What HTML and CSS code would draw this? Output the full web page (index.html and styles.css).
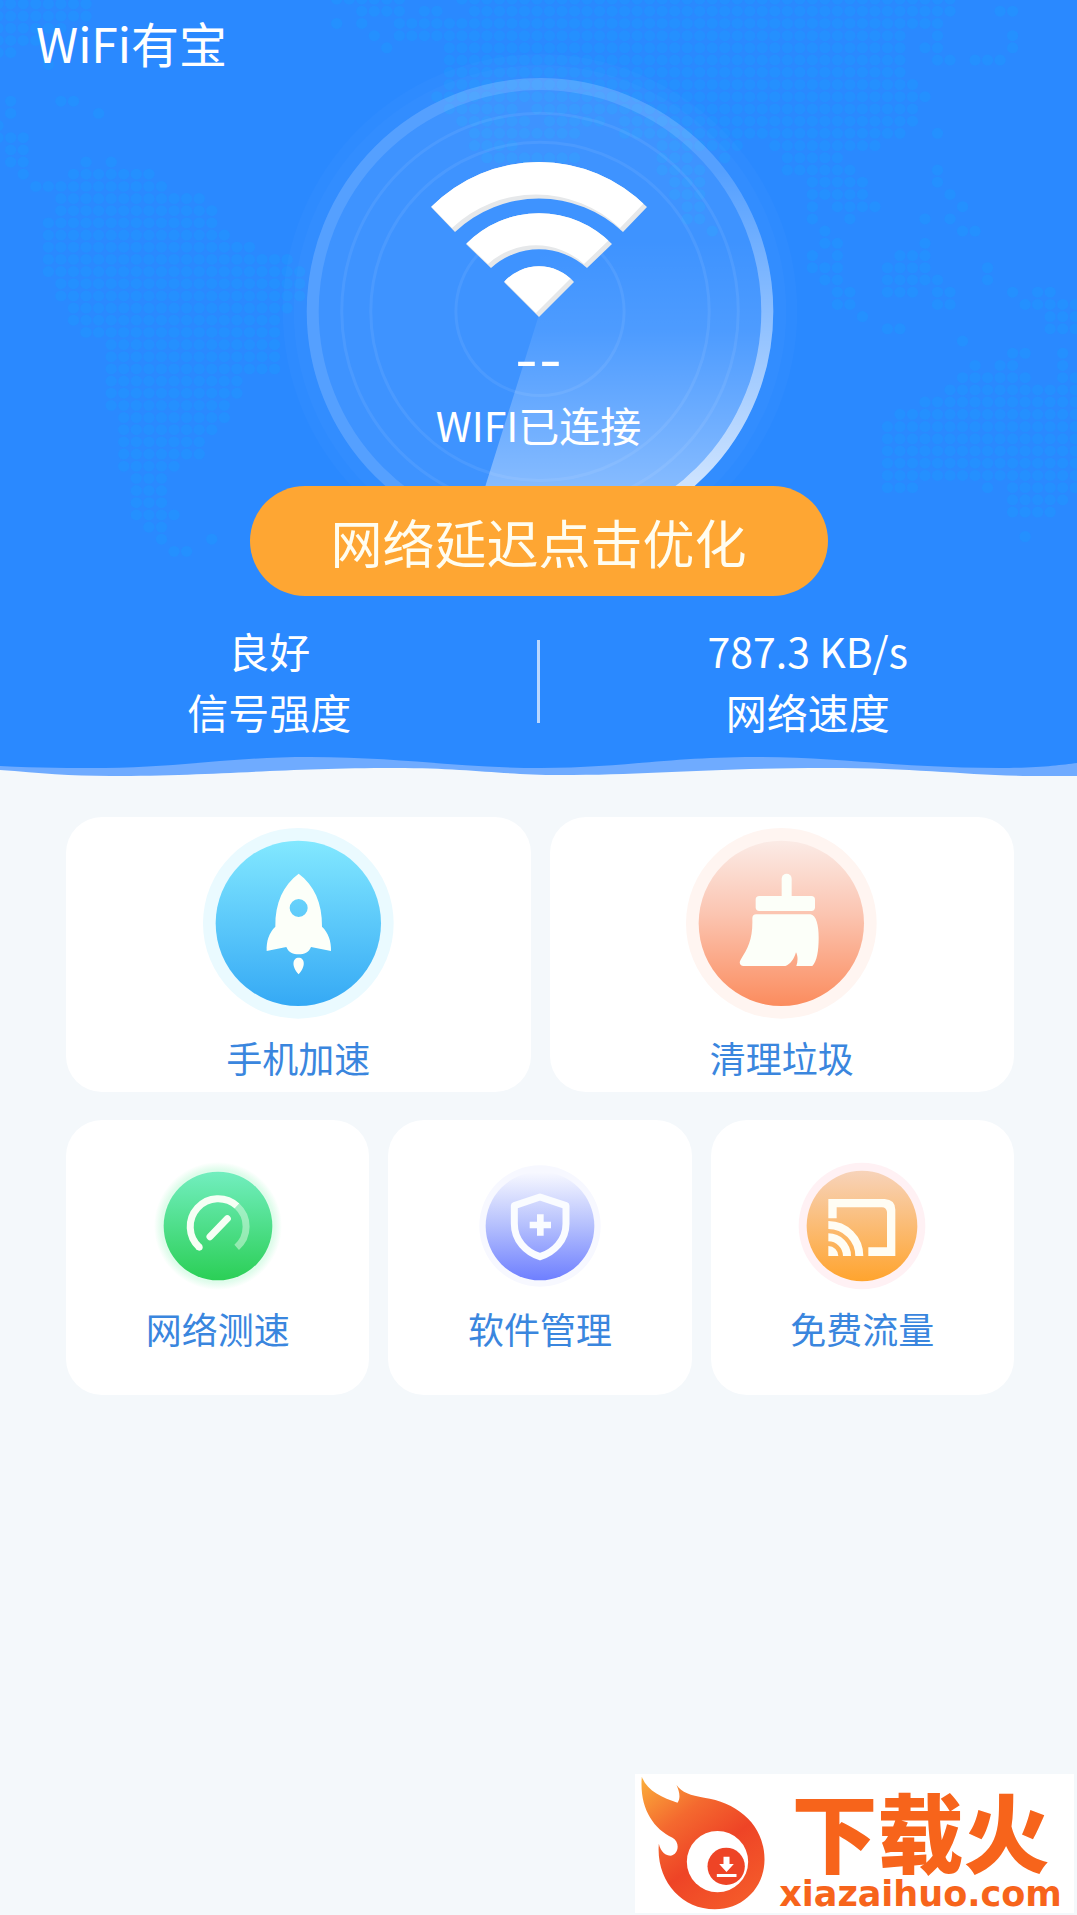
FILE: index.html
```html
<!DOCTYPE html>
<html lang="zh-CN">
<head>
<meta charset="utf-8">
<meta name="viewport" content="width=device-width, initial-scale=1">
<title>WiFi有宝</title>
<link rel="stylesheet" href="styles.css">
</head>
<body>
<header class="hero">
  <svg class="hero-art" viewBox="0 0 1077 776" preserveAspectRatio="xMidYMin slice" aria-hidden="true">
    <defs>
      <linearGradient id="sweep" gradientUnits="userSpaceOnUse" x1="0" y1="240" x2="0" y2="500">
        <stop offset="0" stop-color="#fff" stop-opacity="0"/>
        <stop offset=".35" stop-color="#fff" stop-opacity=".08"/>
        <stop offset="1" stop-color="#fff" stop-opacity=".4"/>
      </linearGradient>
      <linearGradient id="rim" gradientUnits="userSpaceOnUse" x1="0" y1="170" x2="0" y2="480">
        <stop offset="0" stop-color="#fff" stop-opacity="0"/>
        <stop offset="1" stop-color="#fff" stop-opacity=".7"/>
      </linearGradient>
    </defs>
    <!-- dotted world map, one subpath per run of dots -->
    <g class="map-dots">
      <path transform="translate(49 174) scale(12.55 12.15)" d="M-4-14H3.1M-4-13H3.1M-4-12H1.1M-4-11H-.9M-4-10H-2.9M0-9h.1M-3-6h.1M1-6H2.1M-3-5h.1M4-5h.1M-4-4h.1M-4-3H-1.9M-3-2H-1.9M-3-1H-1.9M-2 0h.1M3-1h.1M5-1h.1M2 0H8.1M-1 1H9.1M1 2H12.1M1 3H13.1M0 4H13.1M0 5H14.1M0 6H16.1M0 7H19.1M0 8H20.1M1 9H20.1M1 10H20.1M2 11H19.1M2 12H18.1M3 13H18.1M5 14H18.1M5 15H18.1M5 16H18.1M5 17H15.1M5 18H15.1M5 19H14.1M6 20H14.1M6 21H13.1M6 22H12.1M6 23H12.1M6 24H10.1M7 25H9.1M7 26H9.1M7 27H9.1M7 28H10.1M8 29H9.1M9 30h.1M13 30h.1M10 31H11.1"/>
      <path transform="translate(537 -1) scale(12.5 12.2)" d="M-16 0H-10.9M-6 0H33.1M-14 1H-10.9M-9 1H-7.9M-5 1H33.1M37 1H38.1M-16 2h.1M-14 2h.1M-11 2H32.1M-13 3h.1M-11 3H29.1M32 3h.1M38 3h.1M-12 4h.1M-7 4H29.1M31 4H32.1M38 4h.1M-7 5H29.1M32 5H33.1M35 5H37.1M-7 6H29.1M-7 7H30.1M-8 8H31.1M-7 9H-1.9M0 9H30.1M-6 10H-.9M1 10H5.1M7 10H30.1M-5 11H3.1M7 11H29.1M32 11h.1M-5 12H-1.9M10 12H16.1M19 12H27.1M-4 13H3.1M10 13H12.1M15 13h.1M20 13H24.1M10 14H13.1M20 14H25.1M32 14h.1M11 15H13.1M22 15H26.1M32 15h.1M11 16H13.1M22 16H26.1M33 16h.1M12 17H13.1M22 17h.1M24 17H27.1M34 17h.1M12 18H13.1M22 18h.1M25 18h.1M31 18h.1M33 18h.1M14 19h.1M23 19h.1M34 19H35.1M23 20H24.1M31 20h.1M22 21h.1M24 21h.1M29 21H31.1M22 22H24.1M28 22H31.1M36 22h.1M23 23H24.1M28 23H32.1M36 23h.1M24 24H25.1M28 24H30.1M32 24H33.1M38 24h.1M40 24H41.1M24 25H25.1M32 25H33.1M39 25H43.1M26 26h.1M41 26H43.1M28 27H29.1M41 27H43.1M34 28h.1M38 29H39.1M42 29h.1M35 30h.1M37 30H38.1M42 30h.1M34 31H39.1M42 31H43.1M33 32H43.1M31 33H43.1M29 34H43.1M28 35H43.1M28 36H43.1M28 37H43.1M28 38H43.1M28 39H43.1M28 40H30.1M36 40h.1M38 40H43.1M38 41H42.1M38 42H41.1M39 44h.1"/>
    </g>
    <g class="radar">
      <circle class="halo" cx="540" cy="311" r="257"/>
      <circle class="halo" cx="540" cy="311" r="246"/>
      <circle class="disc" cx="540" cy="311" r="233"/>
      <path fill="url(#sweep)" d="M540 311L474 522A221 221 0 0 0 761 311A221 221 0 0 0 540 90Z"/>
      <circle class="band" cx="540" cy="311" r="227"/>
      <path fill="none" stroke="url(#rim)" stroke-width="12" d="M540 84A227 227 0 0 1 540 538"/>
      <circle class="ring" cx="540" cy="311" r="198"/>
      <circle class="ring" cx="540" cy="311" r="169"/>
      <circle class="ring" cx="540" cy="311" r="84"/>
    </g>
  </svg>

  <h1 class="title">WiFi有宝</h1>

  <div class="status">
    <svg class="wifi" viewBox="432 161 216 157" aria-hidden="true">
      <defs>
        <path id="fan" d="M432 207A152 152 0 0 1 648 207L624 232A122 122 0 0 0 456 232ZM467 244A102 102 0 0 1 613 244L588 268A71 71 0 0 0 492 268ZM505 282A47 47 0 0 1 575 282L540 317Z"/>
        <clipPath id="fan-clip"><use href="#fan"/></clipPath>
      </defs>
      <use href="#fan" fill="#e6e8ea"/>
      <g clip-path="url(#fan-clip)"><use href="#fan" fill="#fff" transform="translate(-3 -4)"/></g>
    </svg>
    <p class="network-name">--</p>
    <p class="network-state">WIFI已连接</p>
  </div>

  <button class="optimize" type="button">网络延迟点击优化</button>

  <dl class="stats">
    <div class="stat"><dd>良好</dd><dt>信号强度</dt></div>
    <div class="stat"><dd>787.3 KB/s</dd><dt>网络速度</dt></div>
  </dl>

  <svg class="wave" viewBox="0 0 1077 20" preserveAspectRatio="none" aria-hidden="true">
    <path fill="#6fabff" d="M0 9C40 11 70 11 105 11C185 10 230 0 310 0C400 0 460 11 541 11C620 11 670 0 754 0C840 0 900 11 1000 11C1040 11 1060 8 1077 6V20H0Z"/>
    <path fill="#f4f8fb" d="M0 13C40 16 70 19 110 19C220 19 280 11 395 11C470 11 500 18 560 18C650 18 710 11 826 11C920 11 960 18 1030 19H1077V20H0Z"/>
  </svg>
</header>

<main class="tools">
  <a class="card wide" href="#boost">
    <svg class="icon-large" viewBox="427 51 573 573" aria-hidden="true">
      <linearGradient id="sky" x2="0" y2="1"><stop stop-color="#82e8ff"/><stop offset="1" stop-color="#35a9f5"/></linearGradient>
      <circle cx="713" cy="337" r="286" fill="#eafaff"/>
      <circle cx="713" cy="337" r="248" fill="url(#sky)"/>
      <path fill="#fcfff9" fill-rule="evenodd" d="M714 188C760 222 785 275 784 347C803 365 812 390 811 420L751 408C745 424 730 430 714 430C698 430 683 424 677 408L618 420C617 390 625 365 644 347C643 275 668 222 714 188ZM714 264A27 27 0 1 0 714 318A27 27 0 1 0 714 264ZM714 440C732 440 737 465 714 490C691 465 696 440 714 440Z"/>
    </svg>
    <span>手机加速</span>
  </a>
  <a class="card wide" href="#clean">
    <svg class="icon-large" viewBox="439 51 573 573" aria-hidden="true">
      <linearGradient id="coral" x2="0" y2="1"><stop stop-color="#fbebe6"/><stop offset=".45" stop-color="#fbc4b0"/><stop offset="1" stop-color="#fb8c5e"/></linearGradient>
      <circle cx="725" cy="337" r="286" fill="#fff5f1"/>
      <circle cx="725" cy="337" r="248" fill="url(#coral)"/>
      <g fill="#fcfff9">
        <rect x="726" y="188" width="30" height="80" rx="15"/>
        <rect x="648" y="255" width="178" height="45" rx="11"/>
        <path d="M650 310H812C830 312 837 345 837 380C837 420 832 450 818 465H770C775 450 775 435 769 424C763 445 752 460 737 465H612C601 465 597 455 603 446C625 410 640 385 638 322Q638 310 650 310Z"/>
      </g>
    </svg>
    <span>清理垃圾</span>
  </a>
  <a class="card" href="#speed">
    <svg class="icon-small" viewBox="281 155 384 384" aria-hidden="true">
      <linearGradient id="green" x2="0" y2="1"><stop stop-color="#72eebf"/><stop offset="1" stop-color="#2bcf56"/></linearGradient>
      <radialGradient id="mint"><stop offset=".88" stop-color="#dffceb"/><stop offset="1" stop-color="#fff"/></radialGradient>
      <circle cx="473" cy="347" r="192" fill="url(#mint)"/>
      <circle cx="473" cy="347" r="163" fill="url(#green)"/>
      <g fill="none" stroke="#f6fff5" stroke-width="21">
        <path stroke-opacity=".45" d="M530 287A83 83 0 0 1 529 411"/>
        <path d="M417 411A83 83 0 0 1 530 287"/>
        <path stroke-linecap="round" d="M449 379L501 325"/>
      </g>
      <circle cx="417" cy="411" r="10" fill="#f6fff5"/>
    </svg>
    <span>网络测速</span>
  </a>
  <a class="card" href="#apps">
    <svg class="icon-small" viewBox="1246 155 384 384" aria-hidden="true">
      <linearGradient id="violet" x2="0" y2="1"><stop stop-color="#f8f9ff"/><stop offset=".5" stop-color="#b4bffd"/><stop offset="1" stop-color="#6e7fff"/></linearGradient>
      <circle cx="1438" cy="347" r="182" fill="#f7f8ff"/>
      <circle cx="1438" cy="347" r="163" fill="url(#violet)"/>
      <g fill="none" stroke="#fafcff">
        <path stroke-width="21" stroke-linejoin="round" d="M1438 260L1516 286V340C1516 390 1480 425 1438 439C1396 425 1361 390 1361 340V286Z"/>
        <path stroke-width="20" d="M1407 344H1471M1439 312V376"/>
      </g>
    </svg>
    <span>软件管理</span>
  </a>
  <a class="card" href="#cast">
    <svg class="icon-small" viewBox="773 156 384 384" aria-hidden="true">
      <linearGradient id="amber" x2="0" y2="1"><stop stop-color="#f7d3ba"/><stop offset="1" stop-color="#ffa42e"/></linearGradient>
      <circle cx="965" cy="348" r="190" fill="#fff1f4"/>
      <circle cx="965" cy="348" r="166" fill="url(#amber)"/>
      <path fill="#fffdf4" d="M864 267H1033Q1065 269 1065 299V438H984V412H1040V306Q1038 292 1025 292H889V325H864ZM864 408A30 30 0 0 1 894 438H864Z"/>
      <path fill="none" stroke="#fffdf4" stroke-width="24" d="M864 345A93 93 0 0 1 957 438M864 382A56 56 0 0 1 920 438"/>
    </svg>
    <span>免费流量</span>
  </a>
</main>

<footer class="footer">
  <a class="brand" href="#xiazaihuo">
    <svg class="flame" viewBox="23 27 395 417" aria-hidden="true">
      <linearGradient id="fire" x1="0" y1="0" x2=".7" y2="1"><stop stop-color="#fbb03b"/><stop offset=".35" stop-color="#f4692f"/><stop offset=".65" stop-color="#ee4426"/><stop offset="1" stop-color="#f4592a"/></linearGradient>
      <path fill="url(#fire)" d="M43 35C58 78 105 98 150 113C160 100 156 80 147 60C162 82 190 92 230 98C330 112 412 180 411 285C410 370 345 433 262 433C160 433 85 345 94 236C100 262 115 272 130 272C152 270 160 232 135 218C75 190 35 125 43 35Z"/>
      <circle cx="270" cy="290" r="92" fill="#fff"/>
      <circle cx="296" cy="304" r="56" fill="#ee4426"/>
      <path fill="#fff" d="M288 275H306V297H319L297 321L275 297H288ZM268 327H327V336H268Z"/>
    </svg>
    <span class="brand-text">
      <span class="brand-name">下载火</span>
      <span class="brand-url">xiazaihuo.com</span>
    </span>
  </a>
</footer>
</body>
</html>
```
FILE: styles.css
```css
* {
  box-sizing: border-box;
}

body {
  margin: 0;
  min-height: 100vh;
  display: flex;
  flex-direction: column;
  background: #f4f8fb;
  font-family: "Noto Sans CJK SC", "Noto Sans", sans-serif;
}

h1, p, dl, dd {
  margin: 0;
}

a {
  text-decoration: none;
}

svg {
  display: block;
}

/* Blue header */
.hero {
  position: relative;
  display: flex;
  flex-direction: column;
  align-items: center;
  padding-top: 14px;
  background: #2a89ff;
  color: #fff;
}

.hero-art {
  position: absolute;
  inset: 0;
  width: 100%;
  height: 100%;
}

.hero > :not(.hero-art) {
  position: relative;
}

.map-dots path {
  fill: none;
  stroke: #2490ff;
  stroke-width: .9;
  stroke-linecap: round;
  stroke-dasharray: 0 1;
}

.radar .halo {
  fill: #fff;
  fill-opacity: .02;
}

.radar .disc {
  fill: #fff;
  fill-opacity: .06;
}

.radar .band {
  fill: none;
  stroke: #fff;
  stroke-opacity: .12;
  stroke-width: 12;
}

.radar .ring {
  fill: none;
  stroke: #fff;
  stroke-opacity: .07;
  stroke-width: 3;
}

.title {
  align-self: flex-start;
  padding-left: 36px;
  font-size: 48px;
  font-weight: 400;
  line-height: 56px;
}

.status {
  display: flex;
  flex-direction: column;
  align-items: center;
  margin-top: 91px;
}

.wifi {
  width: 216px;
  height: 157px;
}

.network-name {
  padding: 14px 0 2px;
  font-family: Inter, sans-serif;
  font-size: 52px;
  line-height: 60px;
}

.network-state {
  font-size: 41px;
  line-height: 60px;
}

.optimize {
  width: 578px;
  max-width: 90%;
  height: 110px;
  margin-top: 32px;
  padding: 0;
  border: 0;
  border-radius: 55px;
  background: #fea633;
  color: #fffdf0;
  font: inherit;
  font-size: 52px;
}

.stats {
  display: grid;
  grid-template-columns: 1fr 1fr;
  align-self: stretch;
  margin: 24px 0 15px;
  font-size: 41px;
  line-height: 61px;
  text-align: center;
}

.stat {
  display: flex;
  flex-direction: column;
}

.stats::after {
  content: "";
  grid-area: 1 / 1 / 2 / 3;
  place-self: center;
  width: 3px;
  height: 83px;
  background: #b9d7ff;
}

.stat:first-child {
  grid-area: 1 / 1;
}

.stat:last-child {
  grid-area: 1 / 2;
}

.wave {
  width: 100%;
  height: 20px;
}

/* Tool cards */
.tools {
  display: grid;
  grid-template-columns: repeat(6, 1fr);
  gap: 28px 19px;
  padding: 40px 63px 40px 66px;
}

.card {
  grid-column: span 2;
  display: flex;
  flex-direction: column;
  align-items: center;
  justify-content: center;
  gap: 16px;
  min-height: 275px;
  padding-bottom: 3px;
  border-radius: 36px;
  background: #fff;
  color: #3a86de;
  font-size: 36px;
  line-height: 44px;
}

.card.wide {
  grid-column: span 3;
}

.icon-large {
  width: 191px;
  height: 191px;
}

.icon-small {
  width: 128px;
  height: 128px;
}

/* Brand mark */
.footer {
  display: flex;
  justify-content: flex-end;
  margin-top: auto;
  padding: 0 3px 2px 0;
}

.brand {
  display: flex;
  width: 439px;
  height: 139px;
  background: #fff;
  color: #f7641b;
}

.flame {
  flex: none;
  width: 132px;
  height: 139px;
}

.brand-text {
  display: flex;
  flex-direction: column;
  align-items: center;
  flex: 1;
  gap: 4px;
  padding-top: 12px;
}

.brand-name {
  font-size: 86px;
  font-weight: 900;
  line-height: 88px;
}

.brand-url {
  font-family: "DejaVu Sans", sans-serif;
  font-size: 35px;
  font-weight: 700;
  line-height: 32px;
}
```
